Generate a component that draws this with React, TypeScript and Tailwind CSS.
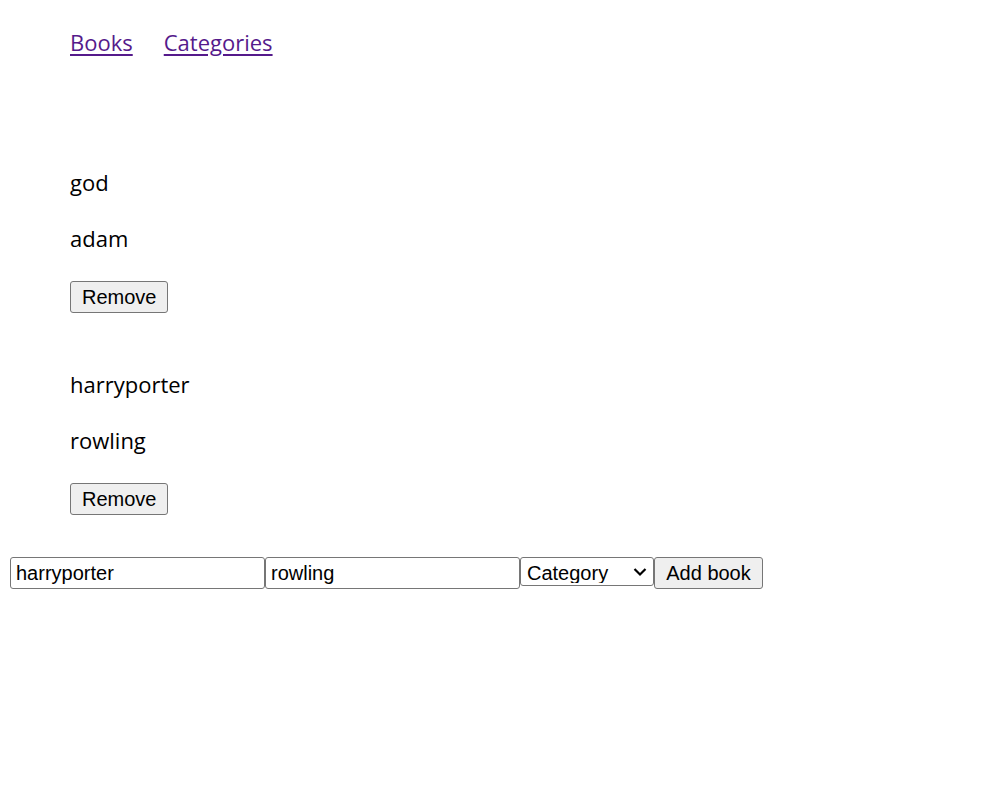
import React from 'react';

const books = [
  { title: 'god', author: 'adam' },
  { title: 'harryporter', author: 'rowling' },
];

const btn =
  "h-[32px] px-[11px] bg-[#efefef] border border-[#767676] rounded-[3px] text-[20px] text-black font-['Liberation_Sans',Arial,sans-serif] leading-none";

export default function App() {
  return (
    <div className="min-h-[801px] bg-white text-black font-['Segoe_UI','Open_Sans',sans-serif] text-[22px]">
      {/* Nav */}
      <nav className="flex gap-[31px] pl-[70px] pt-[26px] leading-[32px]">
        <a href="#" className="text-[#551a8b] underline underline-offset-[3px] decoration-[2px]">Books</a>
        <a href="#" className="text-[#551a8b] underline underline-offset-[3px] decoration-[2px]">Categories</a>
      </nav>

      {/* Book list */}
      <div className="pl-[70px] pt-[108px] flex flex-col">
        {books.map((b, i) => (
          <div key={i} className={i > 0 ? 'mt-[55px] flex flex-col items-start' : 'flex flex-col items-start'}>
            <p className="leading-[32px]">{b.title}</p>
            <p className="leading-[32px] mt-[24px]">{b.author}</p>
            <button className={btn + ' mt-[27px] w-[98px]'}>Remove</button>
          </div>
        ))}
      </div>

      {/* Add form */}
      <div className="flex items-start pl-[10px] mt-[42px] font-['Liberation_Sans',Arial,sans-serif] text-[20px]">
        <input
          defaultValue="harryporter"
          className="w-[255px] h-[32px] border border-[#767676] rounded-[3px] px-[5px] bg-white"
        />
        <input
          defaultValue="rowling"
          className="w-[255px] h-[32px] border border-[#767676] rounded-[3px] px-[5px] bg-white"
        />
        <div className="relative w-[134px] h-[29px] border border-[#767676] rounded-[3px] bg-white">
          <select className="appearance-none w-full h-full pl-[6px] pr-[28px] bg-transparent outline-none leading-none">
            <option>Category</option>
          </select>
          <svg
            className="absolute right-[6px] top-[9px] pointer-events-none"
            width="14"
            height="10"
            viewBox="0 0 14 10"
            fill="none"
          >
            <path d="M1.5 2 L7 7.5 L12.5 2" stroke="#000" strokeWidth="2.2" />
          </svg>
        </div>
        <button className={btn + ' w-[109px]'}>Add book</button>
      </div>
    </div>
  );
}
